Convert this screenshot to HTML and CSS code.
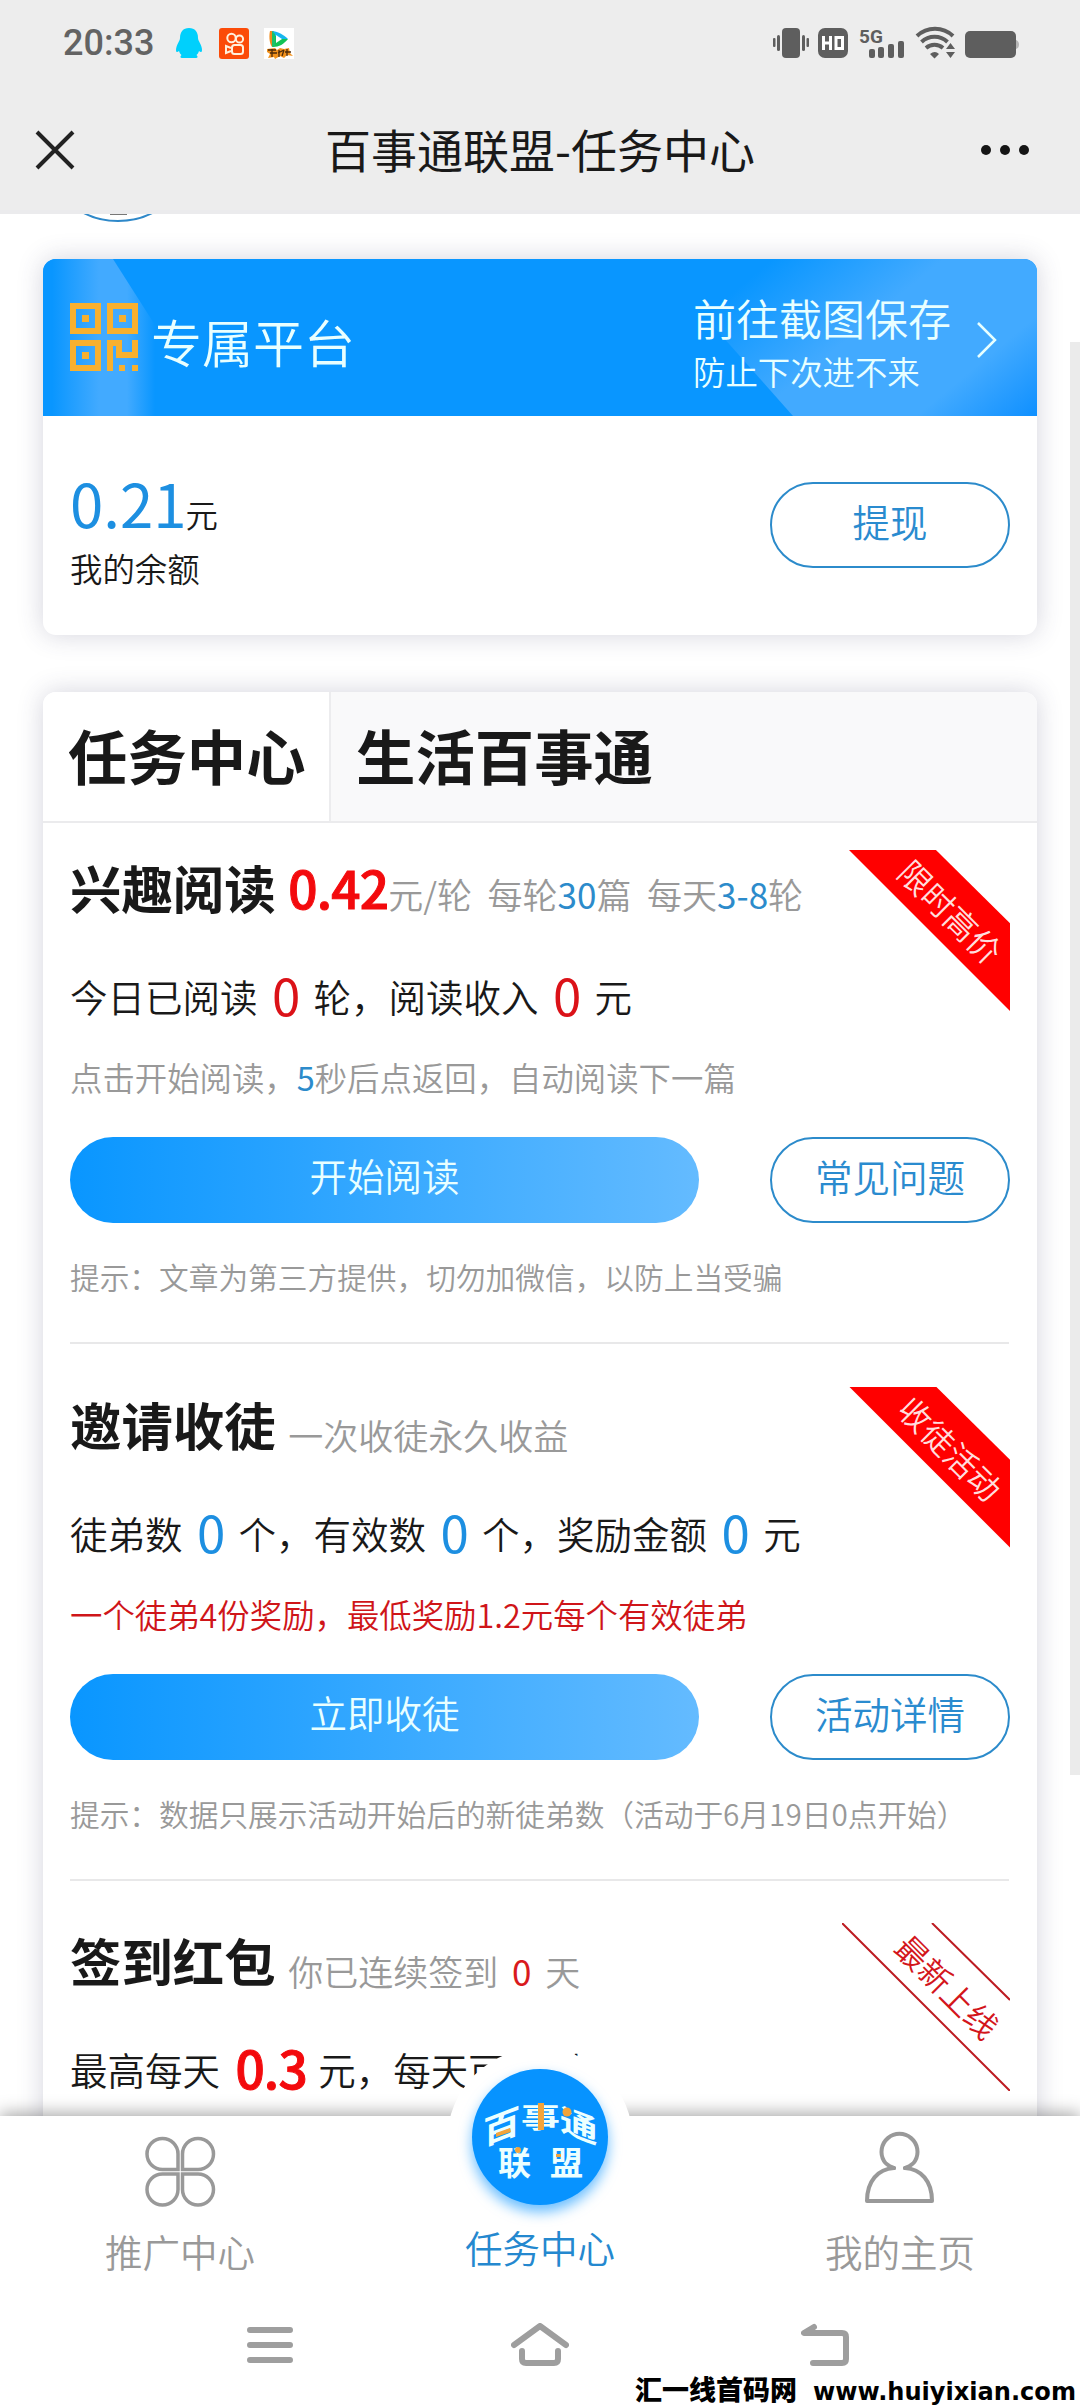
FILE: index.html
```html
<!DOCTYPE html>
<html lang="zh-CN">
<head>
<meta charset="utf-8">
<title>百事通联盟-任务中心</title>
<link rel="stylesheet" href="styles.css">
</head>
<body>
<div class="screen">
  <header class="top">
    <div class="status">
      <div class="status-left">
        <span class="time">20:33</span>
        <svg class="qq" width="28" height="30" viewBox="0 0 28 30"><path fill="#00d0fc" d="M14 0C8 0 5 4 5 10c0 3-4 7-4 12 0 2 1 3 3 1 .5 2 1.500 3 2.500 4C5 28 5 30 7 30h14c2 0 2-2 .5-3 1-1 2-2 2.500-4 2 2 3 1 3-1 0-5-4-9-4-12 0-6-3-10-9-10z"/></svg>
        <svg class="ks" width="30" height="31" viewBox="0 0 30 31"><rect width="30" height="31" rx="3" fill="#fb4b08"/><g fill="none" stroke="#fff0dc" stroke-width="2"><circle cx="12.500" cy="10" r="4.200"/><circle cx="20.500" cy="11" r="3.600"/><rect x="13" y="17" width="11" height="9" rx="2.500"/><path d="M12 20l-5-2v7l5-2"/></g></svg>
        <svg class="game" width="30" height="31" viewBox="0 0 30 31"><rect width="30" height="31" fill="#fff"/><path d="M6 3h4v16H8C5 15 5 7 6 3z" fill="#f18a1b"/><path d="M8 3c5 0 12 4 16 8l-8 1-6-4z" fill="#16b6ef"/><path d="M24 11c-4 5-9 8-15 8l1-12 7 4z" fill="#12c354"/><path d="M8 3l3 3v12l-3 1z" fill="#1bc06a"/><path d="M12 7l6 4-6 4z" fill="#fff"/><path d="M3 21l8-1 2 2 3-2 4 1 5-1 1 5 3 3-6-1-3 3-4-2-5 3-1-2-6 1 2-4-3-2z" fill="#f2921d"/><path d="M4 22h8M6 25h7M8 21v8M15 22v7M14 25l6-3M20 22l-2 6M23 21v7M21 24h6" stroke="#4d2b0b" stroke-width="1.300"/></svg>
      </div>
      <svg class="status-icons" width="250" height="32" viewBox="0 0 250 32" fill="#5e5e5e">
        <rect x="13" y="1" width="18" height="30" rx="4"/><rect x="8" y="8" width="3" height="16" rx="1.500"/><rect x="4" y="11" width="2.500" height="9" rx="1"/><rect x="33" y="8" width="3" height="16" rx="1.500"/><rect x="37.500" y="11" width="2.500" height="9" rx="1"/>
        <rect x="49" y="1" width="30" height="30" rx="7"/><g fill="none" stroke="#fff" stroke-width="3"><path d="M54.500 9v14M61.500 9v14M54.500 16h7M67 10.500h6.500v11H67z"/></g>
        <text x="90" y="15.500" class="five-g">5G</text>
        <rect x="100" y="22" width="6" height="9" rx="2"/><rect x="109" y="20" width="6" height="11" rx="2"/><rect x="119" y="17" width="6" height="14" rx="2"/><rect x="129" y="14" width="6" height="17" rx="2"/>
        <g fill="none" stroke="#5e5e5e" stroke-width="4"><path d="M148 9a26 26 0 0 1 36 0M152.500 15a19 19 0 0 1 26 0M157 21a13 13 0 0 1 17 0"/></g><path d="M161 27q5-4 9 0l-4.500 4.500zM177 22l4.500-6 4.500 6zM177 25h9l-4.500 6z"/>
        <rect x="196" y="4" width="51" height="27" rx="5"/><path d="M247 13q3 1 3 4.500t-3 4.500z" fill="#b5b5b5"/>
      </svg>
    </div>
    <div class="titlebar">
      <svg width="42" height="42" viewBox="0 0 42 42"><path d="M3 3l36 36M39 3L3 39" stroke="#222" stroke-width="4"/></svg>
      <h1>百事通联盟-任务中心</h1>
      <svg width="50" height="12" viewBox="0 0 50 12" fill="#151515"><circle cx="6" cy="6" r="5"/><circle cx="25" cy="6" r="5"/><circle cx="44" cy="6" r="5"/></svg>
    </div>
  </header>

  <main class="content">
    <svg class="avatar-edge" width="80" height="9" viewBox="0 0 80 9"><circle cx="40" cy="-68.500" r="75.500" fill="none" stroke="#2e88c9" stroke-width="2"/><path d="M32 0h17v1H32z" fill="#777"/></svg>
    <div class="scrollbar"></div>

    <section class="card balance-card">
      <div class="banner">
        <svg class="banner-bg" width="994" height="157" viewBox="0 0 994 157">
          <defs>
            <linearGradient id="beam"><stop offset=".08" stop-color="#0996ff"/><stop offset=".5" stop-color="#42aaff"/><stop offset=".75" stop-color="#42aaff"/><stop offset="1" stop-color="#0996ff"/></linearGradient>
            <linearGradient id="glow" gradientUnits="userSpaceOnUse" x1="730" y1="0" x2="930" y2="240"><stop offset="0" stop-color="#0996ff"/><stop offset=".35" stop-color="#42aaff"/><stop offset=".68" stop-color="#42aaff"/><stop offset="1" stop-color="#0088ff"/></linearGradient>
          </defs>
          <path fill="url(#beam)" d="M0 0h70l42 66v91H0z"/>
          <path fill="url(#glow)" d="M655 50L690 0h304v157H750z"/>
        </svg>
        <svg class="qr" width="68" height="68" viewBox="0 0 68 68"><g fill="none" stroke="#f8b02f" stroke-width="6"><path d="M3 3h25v25H3zM40 3h25v25H40zM3 40h25v25H3z"/><path d="M40 68V40h9v12h16V37"/></g><path fill="#f8b02f" d="M12 12h7v7h-7zM49 12h7v7h-7zM12 49h7v7h-7zM49 62h6v6h-6zM62 62h6v6h-6z"/></svg>
        <div class="banner-title">专属平台</div>
        <div class="banner-text"><div class="save">前往截图保存</div><div class="warn">防止下次进不来</div></div>
        <svg class="chevron" width="22" height="38" viewBox="0 0 22 38"><path d="M2 2l17 17L2 36" fill="none" stroke="#e6ffff" stroke-width="2.500"/></svg>
      </div>
      <div class="balance">
        <div><div class="amount"><b>0.21</b><span>元</span></div><div class="label">我的余额</div></div>
        <div class="btn outline">提现</div>
      </div>
    </section>

    <section class="card tasks">
      <div class="tabs"><div class="tab active">任务中心</div><div class="tab">生活百事通</div></div>

      <article class="task">
        <div class="ribbon"><span>限时高价</span></div>
        <h2>兴趣阅读 <strong>0.42</strong><small>元/轮&nbsp; 每轮<i>30</i>篇&nbsp; 每天<i>3-8</i>轮</small></h2>
        <p class="stats">今日已阅读 <em>0</em> 轮，阅读收入 <em>0</em> 元</p>
        <p class="note">点击开始阅读，<i>5</i>秒后点返回，自动阅读下一篇</p>
        <div class="actions"><div class="btn solid">开始阅读</div><div class="btn outline">常见问题</div></div>
        <p class="tip">提示：文章为第三方提供，切勿加微信，以防上当受骗</p>
      </article>

      <article class="task">
        <div class="ribbon"><span>收徒活动</span></div>
        <h2>邀请收徒 <small class="sub">一次收徒永久收益</small></h2>
        <p class="stats blue">徒弟数 <em>0</em> 个，有效数 <em>0</em> 个，奖励金额 <em>0</em> 元</p>
        <p class="note red">一个徒弟4份奖励，最低奖励1.2元每个有效徒弟</p>
        <div class="actions"><div class="btn solid">立即收徒</div><div class="btn outline">活动详情</div></div>
        <p class="tip">提示：数据只展示活动开始后的新徒弟数（活动于6月19日0点开始）</p>
      </article>

      <article class="task">
        <div class="ribbon lined"><svg width="168" height="168" viewBox="0 0 168 168"><path d="M0 0l168 168M90 0l78 77" stroke="#bd1c22" stroke-width="2"/></svg><span>最新上线</span></div>
        <h2>签到红包 <small class="sub">你已连续签到 <u>0</u> 天</small></h2>
        <p class="stats">最高每天 <strong>0.3</strong> 元，每天可签到</p>
      </article>
    </section>
  </main>

  <nav class="tabbar">
    <div class="nav-item">
      <svg width="72" height="76" viewBox="0 0 72 76"><g fill="none" stroke="#999" stroke-width="3.500"><path d="M34 34.500H18.500A15.500 15.500 0 1 1 34 19zM38.500 34.500V19A15.500 15.500 0 1 1 54 34.500zM34 39v15.500A15.500 15.500 0 1 1 18.500 39zM38.500 39H54a15.500 15.500 0 1 1-15.500 15.500z"/></g></svg>
      <span>推广中心</span>
    </div>
    <div class="nav-item current">
      <span>任务中心</span>
      <div class="halo"></div>
      <div class="logo">
        <svg width="136" height="136" viewBox="0 0 136 136">
          <g class="logo-text">
            <text transform="translate(11 77) skewY(-21) scale(1.040 .93)">百</text>
            <text transform="translate(49 59) scale(1.080 .8)">事</text>
            <text transform="translate(88 61) skewY(21) scale(1.040 .88)">通</text>
            <text class="low" x="26" y="106">联</text><text class="low" x="78" y="106">盟</text>
          </g>
          <g fill="#f3a43a"><path d="M66 34h6v27h-6zM24 64l14-5 1 4-15 5z"/><circle cx="95" cy="43" r="4.500"/><circle cx="46" cy="81" r="3"/><path d="M84 85h5v3h-5z"/></g>
        </svg>
      </div>
    </div>
    <div class="nav-item">
      <svg width="76" height="76" viewBox="0 0 76 76"><g transform="translate(-1 -4)" fill="none" stroke="#999" stroke-width="4" stroke-linecap="round" stroke-linejoin="round"><path d="M33 43c-2-1-7-2-10-7a18 18 0 1 1 31 0c-3 5-8 6-10 7"/><path d="M33 43C17 44 6 56 6 76h65c0-20-11-32-27-33"/></g></svg>
      <span>我的主页</span>
    </div>
  </nav>

  <footer class="system">
    <svg width="46" height="44" viewBox="0 0 46 44" stroke="#9e9e9e" stroke-width="6" stroke-linecap="round"><path d="M3 7h40M3 22h40M3 37h40"/></svg>
    <svg width="58" height="44" viewBox="0 0 58 44" fill="none" stroke="#9e9e9e" stroke-width="6" stroke-linecap="round" stroke-linejoin="round"><path d="M3 22L29 3l26 19M11 28v8q0 4 4 4h28q4 0 4-4v-8"/></svg>
    <svg width="48" height="44" viewBox="0 0 48 44" fill="none" stroke="#9e9e9e" stroke-width="6" stroke-linecap="round" stroke-linejoin="round"><path d="M13 4L3 10h38q4 0 4 4v22q0 4-4 4H12"/></svg>
    <svg class="watermark" width="445" height="38" viewBox="0 0 445 38"><text x="0" y="30" textLength="162" lengthAdjust="spacingAndGlyphs">汇一线首码网</text><text class="site" x="178" y="30" textLength="263" lengthAdjust="spacingAndGlyphs">www.huiyixian.com</text></svg>
  </footer>
</div>
</body>
</html>
```

FILE: styles.css
```css
* { box-sizing: border-box; }
body {
  margin: 0;
  background: #fff;
  font-family: "Noto Sans CJK SC", "Noto Sans", sans-serif;
  font-weight: 350;
  color: #191919;
}
h1, h2, p { margin: 0; }
i, em, u { font-style: normal; text-decoration: none; }
svg { display: block; flex: none; }
.screen { width: 1080px; height: 2408px; display: flex; flex-direction: column; overflow: hidden; white-space: nowrap; }

.top { height: 214px; background: #ededed; flex: none; border-bottom: 4px solid #ebebed; }
.status { height: 86px; padding: 0 61px 0 63px; display: flex; justify-content: space-between; align-items: center; }
.status-left { display: flex; align-items: center; }
.status-icons { overflow: visible; }
.time { font: 500 36px/40px Roboto, sans-serif; color: #636363; width: 112px; }
.ks { margin-left: 16px; }
.game { margin-left: 15px; }
.five-g { font: 700 19px Roboto, sans-serif; }
.titlebar { height: 128px; padding: 0 50px 0 34px; display: grid; grid-template-columns: 100px 1fr 50px; align-items: center; }
.titlebar h1 { font-size: 46px; font-weight: 400; line-height: 60px; text-align: center; margin-left: -34px; padding-bottom: 5px; }

.content { height: 1902px; flex: none; overflow: hidden; position: relative; padding: 45px 43px 0; }
.avatar-edge { position: absolute; left: 78px; top: 0; }
.scrollbar { position: absolute; right: 0; top: 128px; width: 10px; height: 1433px; background: #ebebeb; }
.card { width: 994px; border-radius: 13px; background: #fff; box-shadow: 0 0 26px rgba(60, 60, 100, .22); }

.balance-card { height: 376px; margin-bottom: 57px; }
.banner { height: 157px; border-radius: 13px 13px 0 0; background: #0996ff; position: relative; overflow: hidden; display: flex; color: #e9ffff; padding-left: 27px; }
.banner-bg { position: absolute; left: 0; top: 0; }
.banner > :not(.banner-bg) { position: relative; }
.qr { margin-top: 44px; }
.banner-title { font-size: 51px; line-height: 70px; margin: 47px 0 0 13px; width: 542px; }
.save { font-size: 43px; line-height: 60px; margin-top: 28px; }
.warn { font-size: 32.400px; line-height: 47px; }
.chevron { margin: 62px 0 0 25px; }
.balance { display: flex; justify-content: space-between; padding: 66px 27px 0; }
.amount { display: flex; align-items: baseline; font-size: 32.400px; line-height: 46px; margin-top: -14px; height: 78px; }
.amount b { font-size: 60px; line-height: 68px; font-weight: 400; color: #1d8fe1; margin-right: -1px; }
.label { font-size: 32.400px; line-height: 44px; }

.btn { height: 86px; border-radius: 43px; font-size: 37.500px; line-height: 76px; text-align: center; }
.outline { width: 240px; border: 2px solid #2c8bcb; line-height: 73px; color: #2a8bcf; }
.solid { width: 629px; color: #e9ffff; background: linear-gradient(90deg, #0996ff, #64bbff); }

.tabs { height: 131px; display: flex; border-radius: 13px 13px 0 0; background: #f9f9fa; border-bottom: 2px solid #ebebed; }
.tab { font-size: 59.400px; font-weight: 700; line-height: 124px; padding: 0 25px; }
.active { background: #fff; width: 288px; border-right: 2px solid #ececee; border-radius: 13px 0 0; }

.task { height: 536.500px; padding: 0 28px 0 27px; position: relative; top: -1px; }
.task h2 { font-size: 51.400px; font-weight: 700; line-height: 129px; height: 129px; }
.task strong { font-size: 51.400px; line-height: 1; font-weight: 500; color: #f30a0d; -webkit-text-stroke: 1px #f30a0d; }
.task h2 strong { margin-left: 1px; letter-spacing: -.8px; }
.task small { font-size: 35px; font-weight: 350; line-height: 1; color: #999; }
.task .sub { vertical-align: -4px; margin-left: 1px; }
.task i { color: #2c8bcb; font-weight: 400; }
.task u { color: #d91a1d; font-weight: 400; margin: 0 6px; }
.stats { font-size: 37.500px; line-height: 90px; height: 94px; }
.stats em { font-size: 51px; line-height: 1; font-weight: 400; color: #db1218; vertical-align: -4px; margin: 0 5px 0 6px; }
.stats strong { vertical-align: -4px; margin: 0 3px 0 7px; letter-spacing: -.8px; }
.stats.blue em { color: #1d8fe1; }
.note { font-size: 32.400px; line-height: 64px; height: 92px; color: #999; }
.red { color: #cf1519; }
.actions { display: flex; justify-content: space-between; margin-right: -1px; }
.tip { font-size: 29.700px; line-height: 108px; height: 121px; color: #999; border-bottom: 2px solid #e8e8e9; }
.ribbon { position: absolute; right: 27px; top: 28px; width: 161px; height: 161px; background: red; clip-path: polygon(0 0, 54% 0, 100% 45.500%, 100% 100%); }
.ribbon span { position: absolute; left: 32px; top: 39px; width: 140px; font-size: 32.400px; line-height: 44px; text-align: center; color: #ffdede; transform: rotate(45deg); }
.lined { width: 168px; height: 168px; background: none; clip-path: none; }
.lined span { left: 36px; top: 41px; color: #d3151b; }

.tabbar { height: 176px; flex: none; position: relative; z-index: 1; background: #fff; display: grid; grid-template-columns: repeat(3, 1fr); box-shadow: 0 -3px 16px rgba(0, 0, 0, .34); }
.nav-item { display: flex; flex-direction: column; align-items: center; padding-top: 13px; font-size: 37.500px; line-height: 50px; color: #999; position: relative; }
.nav-item svg { margin-bottom: 21px; }
.nav-item:first-child svg { margin-top: 6px; margin-bottom: 15px; }
.nav-item .logo svg { margin: 0; }
.current { color: #2488cf; }
.current > span { position: relative; z-index: 2; margin-top: 93px; }
.halo { position: absolute; left: 87px; top: -68px; width: 186px; height: 186px; border-radius: 50%; background: #fff; }
.logo { position: absolute; left: 112px; top: -47px; width: 136px; height: 136px; border-radius: 50%; background: #0793ff; box-shadow: 0 7px 13px rgba(7, 147, 255, .6); }
.logo-text { font-size: 36px; font-weight: 700; fill: #ecffff; }
.low { font-size: 33px; }

.system { height: 116px; flex: none; position: relative; z-index: 2; background: #fff; display: grid; grid-template-columns: 270px 270px 300px; padding: 31px 135px 0; justify-items: center; }
.watermark { position: absolute; left: 635px; bottom: 0; overflow: visible; font-size: 27px; font-weight: 900; fill: #000; }
.site { font: 700 24px "DejaVu Sans", sans-serif; }
```
